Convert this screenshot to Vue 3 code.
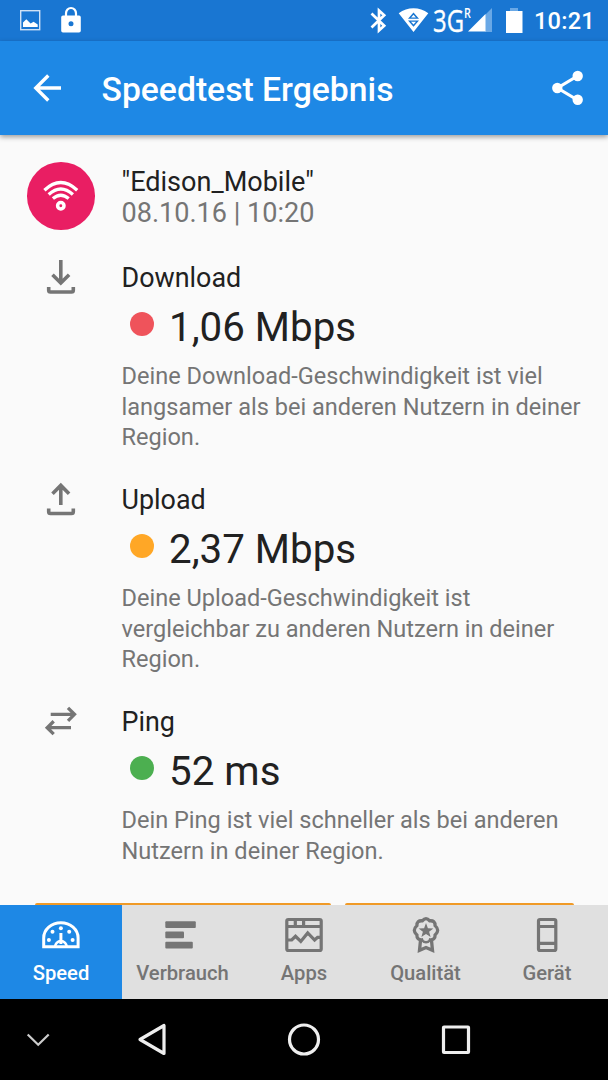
<script setup>
const sections = [
  {
    id: 'download',
    title: 'Download',
    value: '1,06 Mbps',
    lines: ['Deine Download-Geschwindigkeit ist viel', 'langsamer als bei anderen Nutzern in deiner', 'Region.'],
  },
  {
    id: 'upload',
    title: 'Upload',
    value: '2,37 Mbps',
    lines: ['Deine Upload-Geschwindigkeit ist', 'vergleichbar zu anderen Nutzern in deiner', 'Region.'],
  },
  {
    id: 'ping',
    title: 'Ping',
    value: '52 ms',
    lines: ['Dein Ping ist viel schneller als bei anderen', 'Nutzern in deiner Region.'],
  },
]
</script>

<template>
  <div class="screen">
    <header class="status">
      <svg class="status-icons" width="100" height="41" viewBox="0 0 100 41">
        <rect x="20.7" y="10.7" width="19" height="19" fill="none" stroke="#cfe2f6" stroke-width="1.4" />
        <path d="M23 27v-4.500l3.300-3.200 4.300 4.200 3-1.800 4.100 2.800V27z" fill="#fff" />
        <path d="M66 17v-3.500a5 5.500 0 0 1 10 0V17" fill="none" stroke="#fff" stroke-width="2.200" />
        <path fill-rule="evenodd" d="M63 15.500h16a1.800 1.800 0 0 1 1.800 1.800v13.400a1.800 1.800 0 0 1-1.800 1.800H63a1.800 1.800 0 0 1-1.800-1.800V17.300a1.800 1.800 0 0 1 1.800-1.800zM71 21.300a2.500 2.500 0 1 0 0 5 2.500 2.500 0 0 0 0-5z" fill="#fff" />
      </svg>
      <div class="status-right">
        <svg width="62" height="41" viewBox="368 0 62 41">
          <path d="M371.500 13.500l12.700 12.300-5.200 4.700v-20l5.200 4.700L371.500 27.500" fill="none" stroke="#fff" stroke-width="2.700" />
          <path fill-rule="evenodd" d="M398.700 13.300Q405.500 8.300 413.500 8.300T428.300 13.300L413.500 32zM413.500 12.500l-5.500 6.200h11zM408 20.600l5.500 6.200 5.500-6.200z" fill="#fff" />
          <path d="M413.500 14.800l2.400 2.700h-4.800zM411 21.700h5l-2.500 2.800z" fill="#fff" />
        </svg>
        <div class="net"><span>3G</span></div><div class="roam"><span>R</span></div>
        <svg class="signal" width="60" height="41" viewBox="466 0 60 41">
          <path d="M492 8v24h-7V15z" fill="#69a8e6" />
          <path d="M485.500 14v17.500H468z" fill="#fff" />
          <path d="M510 8h8v3h-8z" fill="#69a8e6" />
          <path d="M506 11h16.500v22H506z" fill="#fff" />
        </svg>
        <span class="clock">10:21</span>
      </div>
    </header>

    <div class="appbar">
      <svg width="90" height="94" viewBox="0 41 90 94">
        <path d="M61 88H36M48.300 75.500L35.800 88l12.500 12.500" fill="none" stroke="#fff" stroke-width="3.400" />
      </svg>
      <h1>Speedtest Ergebnis</h1>
      <svg class="share" width="60" height="94" viewBox="548 41 60 94">
        <path d="M577.500 76L557.500 88l20 12" fill="none" stroke="#fff" stroke-width="3.200" />
        <circle cx="577.700" cy="76" r="5.200" fill="#fff" />
        <circle cx="557.300" cy="88" r="5.200" fill="#fff" />
        <circle cx="577.700" cy="99.700" r="5.200" fill="#fff" />
      </svg>
    </div>

    <main class="content">
      <div class="network">
        <div class="badge">
          <svg width="67.500" height="67.500" viewBox="27 162 67.5 67.5">
            <g fill="none" stroke="#fff" stroke-width="3.300">
              <path d="M44.400 190.200Q60.800 174.800 77.200 190.200" />
              <path d="M48.700 194.500Q60.800 183.500 72.900 194.500" />
              <path d="M52.900 198.600Q60.800 191.800 68.700 198.600" />
              <circle cx="60.800" cy="205.800" r="3.200" stroke-width="3.500" />
            </g>
          </svg>
        </div>
        <div class="network-text">
          <div class="ssid">"Edison_Mobile"</div>
          <div class="date">08.10.16 | 10:20</div>
        </div>
      </div>

      <section v-for="s in sections" :key="s.id" class="result">
        <svg class="result-icon" width="121.500" height="40" viewBox="0 0 121.5 40" fill="none" stroke="#757575" stroke-width="3.600">
          <g v-if="s.id === 'download'">
            <path d="M60.800-2v23M52.500 12.700L60.800 21l8.300-8.300" />
            <path d="M48.700 25v3.200q0 1.800 1.800 1.800h21q1.800 0 1.800-1.800V25" />
          </g>
          <g v-else-if="s.id === 'upload'">
            <path d="M60.800 21V1M52.500 9.700L60.800 1.400l8.300 8.300" />
            <path d="M48.700 24.500v3.200q0 1.800 1.800 1.800h21q1.800 0 1.800-1.800V24.500" />
          </g>
          <g v-else stroke-width="3.300">
            <path d="M50.700 8.300H74M68 1.800l6.500 6.500-6.500 6.500" />
            <path d="M71 21.700H47.500M53.700 15.300l-6.500 6.400 6.500 6.400" />
          </g>
        </svg>
        <div class="result-body">
          <h2>{{ s.title }}</h2>
          <div class="value"><i class="dot" :class="s.id"></i><span>{{ s.value }}</span></div>
          <p><span v-for="l in s.lines" :key="l">{{ l }}</span></p>
        </div>
      </section>
    </main>

    <div class="buttons"><i class="wide"></i><i class="narrow"></i></div>

    <nav class="tabs">
      <div class="tab active">
        <svg width="50" height="46" viewBox="36 910 50 46">
          <path d="M43.700 946.800V938a17.200 15.300 0 0 1 34.400 0v8.800z" fill="none" stroke="#fff" stroke-width="3" />
          <path d="M55 947a5.900 5.900 0 0 1 11.800 0" fill="none" stroke="#fff" stroke-width="2.600" />
          <path d="M59.400 933h3v11h-3z" fill="#fff" />
          <g fill="#fff">
            <circle cx="48.900" cy="940" r="2" /><circle cx="52.500" cy="931.700" r="2" />
            <circle cx="60.900" cy="928.200" r="2" /><circle cx="69.200" cy="931.700" r="2" />
            <circle cx="72.600" cy="940" r="2" />
          </g>
        </svg>
        <span>Speed</span>
      </div>
      <div class="tab">
        <svg width="50" height="46" viewBox="158 910 50 46" fill="#757575">
          <rect x="165.300" y="921.300" width="30.500" height="6.700" rx="1" />
          <rect x="165.300" y="931.500" width="18.700" height="6.700" rx="1" />
          <rect x="165.300" y="941.700" width="27.500" height="6.700" rx="1" />
        </svg>
        <span>Verbrauch</span>
      </div>
      <div class="tab">
        <svg width="50" height="46" viewBox="279 910 50 46" fill="none" stroke="#757575" stroke-width="3.200">
          <rect x="286.800" y="919.500" width="34.400" height="31" rx="1.500" />
          <path d="M287 926.500h34M295.300 920v6M303.600 920v6" />
          <path d="M288 940h3.700l3.800-3.700 5.300 5.200 6.900-8.500 6.900 7 3-2.700h3" />
        </svg>
        <span>Apps</span>
      </div>
      <div class="tab">
        <svg width="50" height="46" viewBox="400.5 910 50 46">
          <path d="M420 940.500l-1 9.800 6.500-2.800 6.500 2.800-1-9.800" fill="none" stroke="#757575" stroke-width="3.300" />
          <path d="M421.800 920.800q3.700-4.200 7.400 0 5.600-.5 5.400 4.800 5.200 4.700 0 9.400.2 5.300-5.400 4.800-3.700 4.200-7.400 0-5.600.5-5.400-4.800-5.200-4.700 0-9.400-.2-5.300 5.400-4.800z" fill="#e0e0e0" stroke="#757575" stroke-width="3.300" />
          <path d="M425.500 923l1.900 5.200 5.500.2-4.300 3.400 1.500 5.300-4.600-3-4.600 3 1.500-5.300-4.300-3.400 5.500-.2z" fill="#757575" />
          <circle cx="425.500" cy="938" r="3" fill="#e0e0e0" />
        </svg>
        <span>Qualität</span>
      </div>
      <div class="tab">
        <svg width="50" height="46" viewBox="522 910 50 46" fill="none" stroke="#757575" stroke-width="3.200">
          <rect x="538.500" y="919.500" width="17.300" height="31" rx="1.500" />
          <path d="M538 926.500h18M538 943.300h18" />
        </svg>
        <span>Gerät</span>
      </div>
    </nav>

    <footer class="system">
      <svg width="608" height="81" viewBox="0 999 608 81" fill="none" stroke="#eee" stroke-width="3.200">
        <path d="M27.700 1034.500l10.500 10.300 10.500-10.300" stroke="#ccc" stroke-width="2.200" />
        <path d="M164 1025.500v28L140 1039.500z" stroke-linejoin="round" />
        <circle cx="304" cy="1039.500" r="14.500" />
        <rect x="443.500" y="1027" width="25" height="25.500" rx=".5" />
      </svg>
    </footer>
  </div>
</template>

<style>
body { margin: 0; background: #fafafa; }
</style>

<style scoped>
.screen {
  width: 608px; height: 1080px; overflow: hidden;
  display: flex; flex-direction: column;
  background: #fafafa; color: #212121;
  font-family: Roboto, "Noto Sans", sans-serif;
}
svg { display: block; flex: none; }
h1, h2, p { margin: 0; font-weight: 400; }
.status {
  flex: none; height: 41px; background: #1976d2; color: #fff;
  display: flex; justify-content: space-between; overflow: hidden;
}
.status-right { display: flex; width: 240px; height: 41px; white-space: nowrap; }
.net { flex: none; width: 31px; margin-left: 3px; font: 31px/40px "Open Sans", "Noto Sans", sans-serif; -webkit-text-stroke: .4px #fff; }
.net span, .roam span { display: inline-block; transform: scaleX(.77); transform-origin: 0 0; }
.roam { flex: none; width: 8px; font: 600 14px/26px "Open Sans", "Noto Sans", sans-serif; }
.signal { margin-left: -6px; }
.clock { margin-left: 8px; font-size: 23.600px; line-height: 42px; font-weight: 500; letter-spacing: .2px; }
.appbar {
  flex: none; height: 94px; display: flex; background: #1e88e5; color: #fff;
  box-shadow: 0 2px 5px rgba(0, 0, 0, .38); z-index: 1;
}
.appbar h1 { flex: 1; margin-left: 11.500px; font-size: 33.700px; font-weight: 500; line-height: 97px; white-space: nowrap; }
.content { flex: none; height: 768px; }
.network { display: flex; height: 68px; padding: 27px 0 0 27px; }
.badge { width: 67.500px; height: 67.500px; border-radius: 50%; background: #e91e63; }
.network-text { margin-left: 27px; padding-top: 5px; font-size: 27.050px; line-height: 31px; white-space: nowrap; }
.date { color: #757575; }
.result { display: flex; margin-top: 31px; }
.network + .result { margin-top: 32px; }
.result-icon { overflow: visible; }
.result-body { height: 191px; white-space: nowrap; }
h2 { font-size: 26.900px; line-height: 32px; }
.value { display: flex; align-items: center; margin-top: 9px; height: 48px; font-size: 40.300px; line-height: 50px; }
.dot { width: 24px; height: 24px; margin: -6px 15.500px 0 8px; border-radius: 50%; }
.value span { margin-top: 2px; }
.download.dot { background: #ef535b; }
.upload.dot { background: #ffa726; }
.ping.dot { background: #4caf50; }
p { margin-top: 10px; font-size: 23.560px; line-height: 30.700px; color: #757575; }
p span { display: block; }
.buttons { flex: none; display: flex; gap: 14.500px; height: 2px; padding-left: 34.500px; }
.buttons i { height: 2px; background: #f09a27; border-radius: 2px 2px 0 0; }
.wide { width: 296px; }
.narrow { width: 229px; }
.tabs { flex: none; display: grid; grid-template-columns: 122px 121px 122px 121px 122px; height: 94px; background: #e0e0e0; color: #757575; }
.tab { display: flex; flex-direction: column; align-items: center; padding-top: 5px; height: 89px; font-size: 20.200px; font-weight: 500; }
.tab span { line-height: 34px; }
.active { background: #1e88e5; color: #fff; }
.system { flex: none; height: 81px; background: #000; }
</style>
